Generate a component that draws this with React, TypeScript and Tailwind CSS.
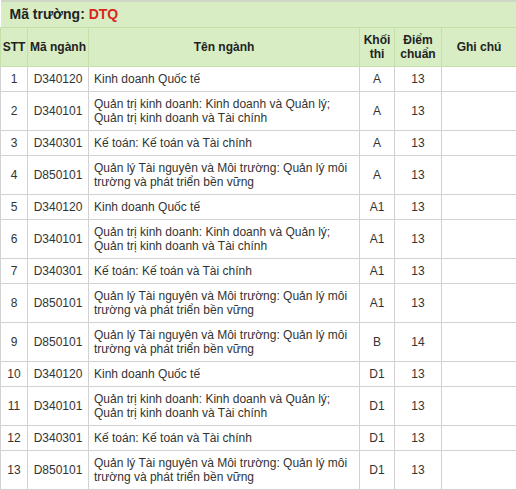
import React from 'react';

type Row = { stt: number; ma: string; ten: string; khoi: string; diem: string };

const rows: Row[] = [
  { stt: 1, ma: 'D340120', ten: 'Kinh doanh Quốc tế', khoi: 'A', diem: '13' },
  { stt: 2, ma: 'D340101', ten: 'Quản trị kinh doanh: Kinh doanh và Quản lý; Quản trị kinh doanh và Tài chính', khoi: 'A', diem: '13' },
  { stt: 3, ma: 'D340301', ten: 'Kế toán: Kế toán và Tài chính', khoi: 'A', diem: '13' },
  { stt: 4, ma: 'D850101', ten: 'Quản lý Tài nguyên và Môi trường: Quản lý môi trường và phát triển bền vững', khoi: 'A', diem: '13' },
  { stt: 5, ma: 'D340120', ten: 'Kinh doanh Quốc tế', khoi: 'A1', diem: '13' },
  { stt: 6, ma: 'D340101', ten: 'Quản trị kinh doanh: Kinh doanh và Quản lý; Quản trị kinh doanh và Tài chính', khoi: 'A1', diem: '13' },
  { stt: 7, ma: 'D340301', ten: 'Kế toán: Kế toán và Tài chính', khoi: 'A1', diem: '13' },
  { stt: 8, ma: 'D850101', ten: 'Quản lý Tài nguyên và Môi trường: Quản lý môi trường và phát triển bền vững', khoi: 'A1', diem: '13' },
  { stt: 9, ma: 'D850101', ten: 'Quản lý Tài nguyên và Môi trường: Quản lý môi trường và phát triển bền vững', khoi: 'B', diem: '14' },
  { stt: 10, ma: 'D340120', ten: 'Kinh doanh Quốc tế', khoi: 'D1', diem: '13' },
  { stt: 11, ma: 'D340101', ten: 'Quản trị kinh doanh: Kinh doanh và Quản lý; Quản trị kinh doanh và Tài chính', khoi: 'D1', diem: '13' },
  { stt: 12, ma: 'D340301', ten: 'Kế toán: Kế toán và Tài chính', khoi: 'D1', diem: '13' },
  { stt: 13, ma: 'D850101', ten: 'Quản lý Tài nguyên và Môi trường: Quản lý môi trường và phát triển bền vững', khoi: 'D1', diem: '13' },
];

const App = () => {
  return (
    <div className="w-[516px] h-[490px] overflow-hidden bg-white font-['Liberation_Sans',Arial,sans-serif] text-[12px] leading-[14px] text-[#333]">
      <table className="w-[516px] table-fixed border-collapse">
        <colgroup>
          <col className="w-[27px]" />
          <col className="w-[61px]" />
          <col className="w-[271px]" />
          <col className="w-[35px]" />
          <col className="w-[47px]" />
          <col className="w-[75px]" />
        </colgroup>
        <thead>
          <tr className="bg-[#d8edc3]">
            <th colSpan={6} className="border-t-2 border-[#cfd8c6] border-b border-b-[#c4dfa9] pl-[9px] py-[4px] text-left text-[14px] leading-[17px] font-bold text-[#222]">
              Mã trường: <span className="text-[#d9261c]">DTQ</span>
            </th>
          </tr>
          <tr className="bg-[#d8edc3] text-[#222]">
            <th className="border border-[#c4dfa9] py-[5px] font-bold">STT</th>
            <th className="border border-[#c4dfa9] py-[5px] font-bold">Mã ngành</th>
            <th className="border border-[#c4dfa9] py-[5px] font-bold">Tên ngành</th>
            <th className="border border-[#c4dfa9] py-[5px] font-bold">
              Khối
              <br />
              thi
            </th>
            <th className="border border-[#c4dfa9] py-[5px] font-bold">
              Điểm
              <br />
              chuẩn
            </th>
            <th className="border border-[#c4dfa9] py-[5px] font-bold">Ghi chú</th>
          </tr>
        </thead>
        <tbody>
          {rows.map((r) => (
            <tr key={r.stt}>
              <td className="border border-[#d2d2d2] py-[5px] text-center">{r.stt}</td>
              <td className="border border-[#d2d2d2] py-[5px] text-center">{r.ma}</td>
              <td className="border border-[#d2d2d2] py-[5px] pl-[5px] pr-[8px]">{r.ten}</td>
              <td className="border border-[#d2d2d2] py-[5px] text-center">{r.khoi}</td>
              <td className="border border-[#d2d2d2] py-[5px] text-center">{r.diem}</td>
              <td className="border border-[#d2d2d2] py-[5px]"></td>
            </tr>
          ))}
        </tbody>
      </table>
    </div>
  );
};

export default App;
